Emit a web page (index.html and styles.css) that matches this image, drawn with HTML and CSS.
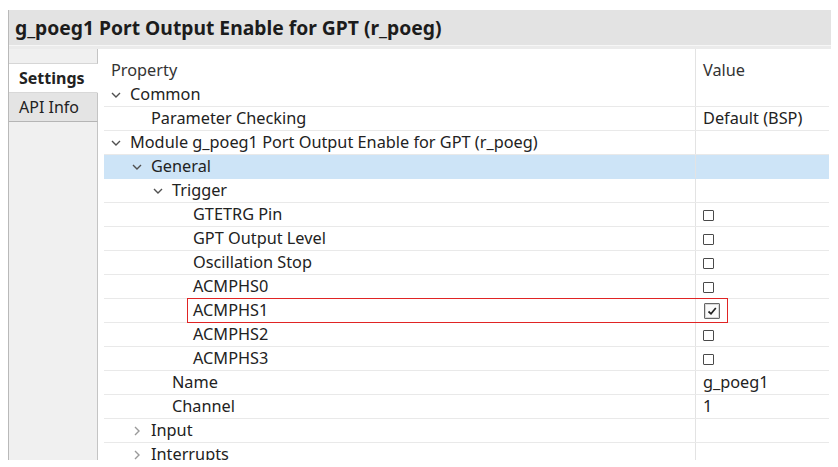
FILE: index.html
```html
<!DOCTYPE html>
<html>
<head>
<meta charset="utf-8">
<link rel="stylesheet" href="styles.css">
</head>
<body>
<div class="frame">
  <div class="title">g_poeg1 Port Output Enable for GPT (r_poeg)</div>
  <div class="title-rule"></div>
  <div class="main">
    <div class="tabs">
      <div class="tab-top"></div>
      <div class="tab active">Settings</div>
      <div class="tab">API Info</div>
      <div class="tab-rest"></div>
    </div>
    <div class="table">
      <div class="head">
        <div class="hcell prop">Property</div>
        <div class="hcell val">Value</div>
      </div>
      <div class="rows">
        <div class="row"><div class="cell prop l0"><span class="chev down"><svg viewBox="0 0 10 6" width="10" height="6"><polyline points="1,1 5,5 9,1"/></svg></span>Common</div><div class="cell val"></div></div>
        <div class="row"><div class="cell prop l1"><span class="chev"></span>Parameter Checking</div><div class="cell val">Default (BSP)</div></div>
        <div class="row"><div class="cell prop l0"><span class="chev down"><svg viewBox="0 0 10 6" width="10" height="6"><polyline points="1,1 5,5 9,1"/></svg></span>Module g_poeg1 Port Output Enable for GPT (r_poeg)</div><div class="cell val"></div></div>
        <div class="row selected"><div class="cell prop l1"><span class="chev down"><svg viewBox="0 0 10 6" width="10" height="6"><polyline points="1,1 5,5 9,1"/></svg></span>General</div><div class="cell val"></div></div>
        <div class="row"><div class="cell prop l2"><span class="chev down"><svg viewBox="0 0 10 6" width="10" height="6"><polyline points="1,1 5,5 9,1"/></svg></span>Trigger</div><div class="cell val"></div></div>
        <div class="row"><div class="cell prop l3"><span class="chev"></span>GTETRG Pin</div><div class="cell val"><span class="cb"></span></div></div>
        <div class="row"><div class="cell prop l3"><span class="chev"></span>GPT Output Level</div><div class="cell val"><span class="cb"></span></div></div>
        <div class="row"><div class="cell prop l3"><span class="chev"></span>Oscillation Stop</div><div class="cell val"><span class="cb"></span></div></div>
        <div class="row"><div class="cell prop l3"><span class="chev"></span>ACMPHS0</div><div class="cell val"><span class="cb"></span></div></div>
        <div class="row marked"><div class="cell prop l3"><span class="chev"></span>ACMPHS1</div><div class="cell val"><span class="cb checked"><svg viewBox="0 0 12 12" width="12" height="12"><polyline points="2.5,6.5 5,8.8 9.8,3"/></svg></span></div><div class="mark"></div></div>
        <div class="row"><div class="cell prop l3"><span class="chev"></span>ACMPHS2</div><div class="cell val"><span class="cb"></span></div></div>
        <div class="row"><div class="cell prop l3"><span class="chev"></span>ACMPHS3</div><div class="cell val"><span class="cb"></span></div></div>
        <div class="row"><div class="cell prop l2"><span class="chev"></span>Name</div><div class="cell val">g_poeg1</div></div>
        <div class="row"><div class="cell prop l2"><span class="chev"></span>Channel</div><div class="cell val">1</div></div>
        <div class="row"><div class="cell prop l1"><span class="chev right"><svg viewBox="0 0 6 10" width="6" height="10"><polyline points="1,1 5,5 1,9"/></svg></span>Input</div><div class="cell val"></div></div>
        <div class="row last"><div class="cell prop l1"><span class="chev right"><svg viewBox="0 0 6 10" width="6" height="10"><polyline points="1,1 5,5 1,9"/></svg></span>Interrupts</div><div class="cell val"></div></div>
      </div>
    </div>
  </div>
</div>
</body>
</html>
```

FILE: styles.css
```css
html, body {
  margin: 0;
  padding: 0;
  background: #ffffff;
}
body {
  font-family: "Noto Sans", "Open Sans", sans-serif;
  color: #222222;
}
.frame {
  margin: 10px 8px 0 8px;
  width: 822px;
  height: 450px;
  border-left: 1px solid #b9b9b9;
  display: flex;
  flex-direction: column;
  overflow: hidden;
}
.title {
  height: 35px;
  line-height: 36px;
  background: #e3e3e3;
  font-weight: bold;
  font-size: 19.3px;
  padding-left: 6px;
  color: #1c1c1c;
  flex: none;
}
.title-rule {
  height: 3px;
  border-top: 1px solid #f6f6f6;
  background: #ebebeb;
  flex: none;
}
.main {
  flex: 1;
  display: flex;
  min-height: 0;
}
.tabs {
  width: 89px;
  flex: none;
  display: flex;
  flex-direction: column;
  background: #f0f0f0;
}
.tab-top {
  height: 14px;
  border-right: 1px solid #c4c4c4;
  border-bottom: 1px solid #d6d6d6;
}
.tab {
  height: 28px;
  line-height: 28px;
  font-size: 16px;
  padding-left: 10px;
  border-right: 1px solid #c4c4c4;
  border-bottom: 1px solid #b5b5b5;
  background: #e4e4e4;
  color: #222;
}
.tab.active {
  background: #ffffff;
  font-weight: bold;
  border-right-color: #ffffff;
  border-bottom-color: #d8d8d8;
}
.tab-rest {
  flex: 1;
  border-right: 1px solid #c4c4c4;
}
.table {
  flex: 1;
  display: flex;
  flex-direction: column;
  padding-left: 6px;
  font-size: 16.3px;
}
.head {
  display: flex;
  height: 34px;
  flex: none;
}
.hcell {
  padding-top: 9px;
  line-height: 24px;
  color: #333;
}
.prop {
  width: 592px;
  flex: none;
  box-sizing: border-box;
  padding-left: 7px;
  border-right: 1px solid #e3e3e3;
}
.val {
  flex: 1;
  padding-left: 7px;
}
.rows {
  display: flex;
  flex-direction: column;
}
.row {
  display: flex;
  height: 24px;
  flex: none;
  border-bottom: 1px solid #e9e9e9;
  box-sizing: border-box;
  position: relative;
  width: 725px;
}
.row.selected {
  background: #cde4f7;
  border-bottom-color: #cde4f7;
}
.cell {
  line-height: 23px;
  display: flex;
  align-items: center;
  white-space: nowrap;
}
.chev {
  width: 19px;
  flex: none;
  display: flex;
  align-items: center;
}
.chev svg {
  fill: none;
  stroke: #505050;
  stroke-width: 1.4;
}
.chev.right svg {
  stroke: #9a9a9a;
  margin-left: 2px;
}
.l1 { padding-left: 28px; }
.l2 { padding-left: 49px; }
.l3 { padding-left: 70px; }
.cb {
  width: 9px;
  height: 9px;
  border: 1.5px solid #4a4a4a;
  border-radius: 1px;
  display: inline-flex;
  align-items: center;
  justify-content: center;
  margin-top: 1px;
}
.cb.checked {
  width: 14px;
  height: 14px;
  border: 1.5px solid #666;
  background: #fafafa;
  box-shadow: inset 0 0 0 1px #d8d8d8;
  margin-left: 1px;
}
.cb.checked svg {
  fill: none;
  stroke: #222;
  stroke-width: 1.7;
}
.mark {
  position: absolute;
  left: 83px;
  top: -1px;
  width: 541px;
  height: 25px;
  border: 1.5px solid #e02424;
  box-sizing: border-box;
}
```
